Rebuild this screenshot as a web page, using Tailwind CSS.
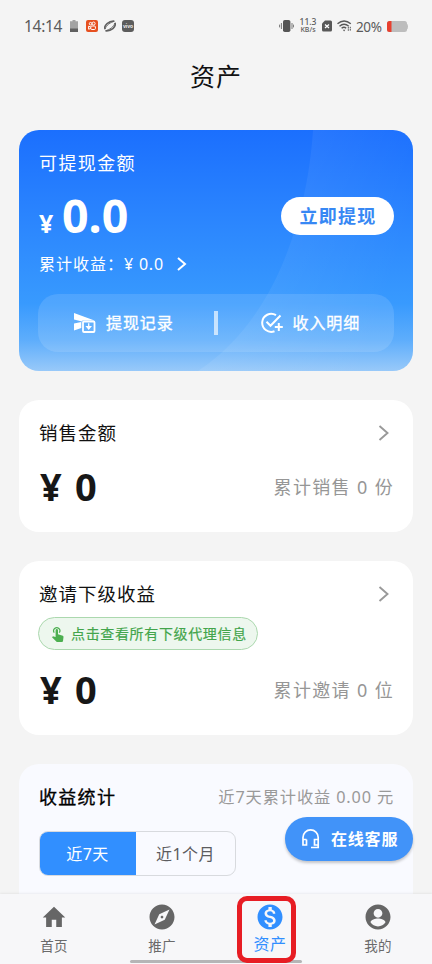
<!DOCTYPE html>
<html lang="zh-CN">
<head>
<meta charset="utf-8">
<meta name="viewport" content="width=device-width, initial-scale=1">
<title>资产</title>
<script src="https://cdn.jsdelivr.net/npm/@tailwindcss/browser@4"></script>
</head>
<body class="bg-[#f4f4f4] font-['Noto_Sans','Noto_Sans_CJK_SC',sans-serif] text-[#111]">
<div class="relative flex h-[964px] w-[432px] flex-col overflow-hidden">

  <!-- Status bar -->
  <header class="flex h-[52px] shrink-0 items-center justify-between pl-6 pr-6 text-[#5a5a5a]">
    <div class="flex items-center">
      <span class="w-[38px] whitespace-nowrap text-[15.5px] leading-5 tracking-[-0.3px]">14:14</span>
      <svg class="ml-2 h-3 w-2" viewBox="0 0 8 12"><path d="M2.5 0h3v1.2H8V12H0V1.2h2.5z" fill="#a3a3a3"/><path d="M0 8.5h8V12H0z" fill="#606060"/></svg>
      <svg class="ml-2 h-3 w-3" viewBox="0 0 12 12"><rect width="12" height="12" rx="2" fill="#e65020"/><g fill="none" stroke="#fff" stroke-width="1"><circle cx="4.6" cy="3.7" r="1.3"/><circle cx="7.6" cy="3.5" r="1.5"/><rect x="4.8" y="6" width="4.6" height="3.5" rx="1"/><path d="M4.8 7 2.6 6.2v3l2.2-.7"/></g></svg>
      <svg class="ml-1.5 h-3 w-3" viewBox="0 0 12 12" fill="none" stroke="#606060"><path d="M1.1 9.2C-.6 5.2 5 .8 10.3 1.2M1.5 10.8C7 11.5 12.5 7 11 2.8" stroke-width="1.6"/><path d="M1.2 8.8C2 5.8 6.5 2 10.4 1.3M1.6 10.7C5.4 10 10 6.5 10.9 3" stroke-width=".9"/></svg>
      <span class="ml-1.5 flex h-3 w-3 items-center justify-center rounded-[3px] bg-[#5c5c5c] font-['Inter',sans-serif] text-[5px] font-semibold leading-none text-white">vivo</span>
    </div>
    <div class="flex items-center">
      <svg class="h-3 w-[15px]" viewBox="0 0 15 12"><rect x="4" width="7.4" height="12" rx="1.8" fill="#555"/><path d="M2.4 3v6M.6 4.6v2.8M13 3v6M14.6 4.6v2.8" stroke="#777" stroke-width="1"/></svg>
      <span class="-mt-0.5 ml-[5px] flex w-[18px] flex-col items-center whitespace-nowrap font-medium"><span class="text-[8.5px] leading-[9px]">11.3</span><span class="text-[7px] leading-[7px]">KB/s</span></span>
      <svg class="ml-[5px] h-[12px] w-[10px]" viewBox="0 0 10 11"><path d="M3 0h5.5Q10 0 10 1.5v8Q10 11 8.500 11h-7Q0 11 0 9.500V3z" fill="#585858"/><path d="m3 4 4 3.500M7 4 3 7.500" stroke="#fff" stroke-width="1.300"/></svg>
      <svg class="ml-[5px] h-3 w-[15px]" viewBox="0 0 15 12" fill="none" stroke="#585858" stroke-width="1.400"><path d="M.5 3.800Q7 -1.800 13.800 3.800M2.500 6.200Q7 2.300 11.800 6.200M4.600 8.300Q7 6.300 9.200 8.300"/><path d="m5.800 9.800 1.300 1.600 1.300-1.600z" fill="#585858" stroke="none"/><path d="M11.300 7v3.800M13.300 6.800v3.800" stroke-width="1" stroke-dasharray="1.600 .6"/></svg>
      <span class="ml-1 w-[28px] whitespace-nowrap pt-px text-[13.5px] leading-5 tracking-[-0.4px]">20%</span>
      <svg class="ml-[3px] h-[11px] w-[21px]" viewBox="0 0 21 11"><rect width="20" height="11" rx="2.500" fill="#bdbdbd"/><path d="M19.500 2.500q1.500.5 1.500 3t-1.500 3z" fill="#bdbdbd"/><path d="M4.500 0H2.500Q0 0 0 2.500v6Q0 11 2.500 11h2z" fill="#e8402f"/></svg>
    </div>
  </header>

  <h1 class="flex h-[78px] shrink-0 justify-center pt-[6px] text-[25px] leading-9 tracking-[1px]">资产</h1>

  <main class="flex flex-col px-[19px]">

    <!-- Balance card -->
    <section class="relative h-[241px] overflow-hidden rounded-[20px] px-5 text-white">
      <svg class="absolute inset-0 h-full w-full" viewBox="0 0 394 241"><defs><linearGradient id="base" x1="0" y1="0" x2="0" y2="1"><stop offset="0" stop-color="#1b6ffe"/><stop offset=".35" stop-color="#2a84fe"/><stop offset=".72" stop-color="#389afe"/><stop offset=".87" stop-color="#5dadfc"/><stop offset="1" stop-color="#98c9f9"/></linearGradient><linearGradient id="sheen" x1="0" y1="0" x2="1" y2=".35"><stop offset="0" stop-color="#fff" stop-opacity=".11"/><stop offset="1" stop-color="#fff" stop-opacity="0"/></linearGradient></defs><path fill="url(#base)" d="M0 0h394v241H0z"/><path d="M294 0C290 66 266 184 179 241h215V0z" fill="url(#sheen)"/></svg>
      <div class="relative">
        <p class="pt-5 text-[18px] leading-[26px] tracking-[1.4px]">可提现金额</p>
        <div class="flex h-[74px] items-center justify-between">
          <div class="mt-[3px] flex items-baseline font-bold"><span class="w-[23px] text-[25px]">¥</span><span class="text-[46.5px] leading-[62px]">0.0</span></div>
          <button class="-mr-px mt-1.5 h-[38px] w-[113px] rounded-full bg-white pl-px text-[18px] font-bold tracking-[1.2px] text-[#3788f4]">立即提现</button>
        </div>
        <p class="flex h-7 items-center text-[16px] leading-6 tracking-[1px]"><span class="w-[85px] whitespace-nowrap">累计收益：</span><span class="whitespace-nowrap tracking-[0.8px]">¥ 0.0</span>
          <svg class="ml-[13px] h-[14px] w-[10px]" viewBox="0 0 10 14" fill="none" stroke="#fff" stroke-width="2"><path d="m1 1 7 6-7 6"/></svg></p>
        <div class="-mx-px mt-4 flex h-[58px] items-center rounded-[20px] bg-white/12 text-[16px] tracking-[0.9px]">
          <div class="flex w-[176px] items-center pl-[35px]">
            <svg class="h-[22px] w-[23px]" viewBox="0 0 23 22"><path d="M1 1 21.500 8.500H9.500L9 9.500 1 7.500zM1 11.500 8.300 10v6L1 18.500z" fill="#fff"/><rect x="10" y="9.500" width="11.500" height="10.500" rx="1" fill="none" stroke="#fff" stroke-width="1.800"/><path d="M15.700 11.200V15M13.800 14.600l1.900 2.300 1.900-2.300z" stroke="#fff" stroke-width="1.300" fill="#fff"/></svg>
            <span class="ml-[10px] whitespace-nowrap leading-6 [-webkit-text-stroke:0.35px_currentColor]">提现记录</span>
          </div>
          <span class="h-6 w-[3.500px] bg-white/65"></span>
          <div class="flex items-center pl-[42px]">
            <svg class="h-[22px] w-[24px]" viewBox="0 0 24 22" fill="none" stroke="#fff" stroke-width="2"><path d="M16 3.200A9 9 0 1 0 14.500 19.200"/><path d="m6.500 9.800 4 4L20.500 3.500M18.800 11v8M14.800 15h8"/></svg>
            <span class="ml-[9px] whitespace-nowrap leading-6 [-webkit-text-stroke:0.35px_currentColor]">收入明细</span>
          </div>
        </div>
      </div>
    </section>

    <!-- Sales card -->
    <section class="mt-[29px] h-[132px] rounded-[20px] bg-white px-5 pt-5">
      <div class="flex h-[26px] items-center justify-between"><h2 class="text-[18.5px] tracking-[1px]">销售金额</h2>
        <svg class="mr-1 h-4 w-[11px]" viewBox="0 0 11 16" fill="none" stroke="#999" stroke-width="1.900"><path d="m1.500 1 8 7-8 7"/></svg></div>
      <div class="mt-[13px] flex h-[56px] items-center justify-between"><div class="-mt-0.5 flex pl-px text-[38px] font-bold leading-[52px] text-[#171717]"><span class="w-[35px]">¥</span><span>0</span></div><p class="-mr-px mt-px text-[18px] tracking-[1.35px] text-[#969696]">累计销售 0 份</p></div>
    </section>

    <!-- Invitation card -->
    <section class="mt-[29px] h-[174px] rounded-[20px] bg-white px-5 pt-5">
      <div class="flex h-[26px] items-center justify-between"><h2 class="text-[18.5px] tracking-[1px]">邀请下级收益</h2>
        <svg class="mr-1 h-4 w-[11px]" viewBox="0 0 11 16" fill="none" stroke="#999" stroke-width="1.900"><path d="m1.500 1 8 7-8 7"/></svg></div>
      <div class="-ml-px mt-[10px] flex h-[33px] w-[220px] items-center rounded-full border border-[#abd8ae] bg-[#edf7ee] pl-[13px] text-[#43a54b]">
        <svg class="h-4 w-[12px]" viewBox="0 0 12 16"><path d="M2.300 6.700A3.100 3.100 0 1 1 7.200 6.700" fill="none" stroke="#4caf50" stroke-width="1.200"/><path d="M3.600 4.200q0-1.200 1.200-1.200T6 4.200v4l4.800 1.600q.8.400.7 1.300L11 15q-.1 1-1 1H5.300q-.6 0-1-.5L0 11.200l.7-.7q.3-.3 1 0l1.900.5z" fill="#4caf50"/></svg>
        <span class="ml-[7px] whitespace-nowrap text-[14px] leading-5 tracking-[0.65px] [-webkit-text-stroke:0.2px_currentColor]">点击查看所有下级代理信息</span>
      </div>
      <div class="mt-[12px] flex h-[56px] items-center justify-between"><div class="-mt-0.5 flex pl-px text-[38px] font-bold leading-[52px] text-[#171717]"><span class="w-[35px]">¥</span><span>0</span></div><p class="-mr-px mt-px text-[18px] tracking-[1.35px] text-[#969696]">累计邀请 0 位</p></div>
    </section>

    <!-- Statistics card -->
    <section class="mt-[29px] h-[180px] rounded-t-[20px] bg-[#f9faff] px-5 pt-5">
      <div class="flex h-[26px] items-center justify-between"><h2 class="text-[18px] tracking-[1.3px] text-black [-webkit-text-stroke:0.3px_currentColor]">收益统计</h2><p class="-mr-px mt-px whitespace-nowrap text-[16.25px] tracking-[0.85px] text-[#999]">近7天累计收益 0.00 元</p></div>
      <div class="mt-[21px] flex h-[45px] w-[197px] overflow-hidden rounded-[9px] border border-[#d8dade] text-[16px] tracking-[0.5px]">
        <button class="w-[96px] bg-[#318fff] pt-px pr-px text-white">近7天</button><button class="flex-1 pt-px text-[#5c5c60]">近1个月</button>
      </div>
    </section>
  </main>

  <!-- Floating customer service button -->
  <button class="absolute left-[285px] top-[817px] flex h-[44px] w-[128px] items-center rounded-full bg-[#4193f9] pl-4 text-white shadow-[0_2px_3px_rgba(0,0,0,0.22)]">
    <svg class="h-[22px] w-[19px]" viewBox="0 0 19 22" fill="none" stroke="#fff" stroke-width="1.700"><path d="M5.500 11.500H2V9.500a7.600 7.600 0 0 1 15.200 0v10H10M2 11v6h3.500v-5.500M17.200 11.500h-3.700V17h3.700"/></svg>
    <span class="ml-[11px] whitespace-nowrap text-[16px] font-bold leading-6 tracking-[0.8px]">在线客服</span>
  </button>

  <!-- Bottom navigation -->
  <nav class="absolute inset-x-0 bottom-0 grid h-[70px] grid-cols-4 bg-[#f7f7f9] text-[13.5px] text-[#6a6a6a] shadow-[0_-1px_2px_rgba(0,0,0,0.06)]">
    <a class="flex flex-col items-center pt-2"><svg class="h-[30px] w-[30px]" viewBox="0 0 24 24" fill="#666"><path d="M10 20v-6h4v6h5v-8h3L12 3 2 12h3v8z" transform="translate(1.2 .9) scale(.9 .95)"/></svg><span class="mt-1 leading-5 tracking-[0.3px]">首页</span></a>
    <a class="flex flex-col items-center pt-2"><svg class="h-[30px] w-[30px]" viewBox="0 0 24 24" fill="#666"><path d="M12 10.900c-.61 0-1.100.49-1.100 1.100s.49 1.100 1.100 1.100 1.100-.49 1.100-1.100-.49-1.100-1.100-1.100zM12 2C6.480 2 2 6.480 2 12s4.480 10 10 10 10-4.480 10-10S17.520 2 12 2zm2.190 12.190L6 18l3.810-8.190L18 6l-3.810 8.190z"/></svg><span class="mt-1 leading-5 tracking-[0.3px]">推广</span></a>
    <a class="flex flex-col items-center pt-2 text-[#318fff]"><svg class="h-[30px] w-[30px]" viewBox="0 0 24 24" fill="#318fff"><path d="M12 2C6.480 2 2 6.480 2 12s4.480 10 10 10 10-4.480 10-10S17.520 2 12 2zm1.410 16.090V20h-2.670v-1.930c-1.710-.36-3.160-1.460-3.270-3.400h1.960c.1 1.050.82 1.870 2.650 1.870 1.960 0 2.400-.98 2.400-1.590 0-.83-.44-1.610-2.670-2.140-2.480-.6-4.180-1.620-4.180-3.670 0-1.720 1.390-2.840 3.110-3.210V4h2.670v1.950c1.860.45 2.790 1.860 2.850 3.390H14.300c-.05-1.110-.64-1.870-2.220-1.870-1.500 0-2.400.68-2.400 1.640 0 .84.65 1.390 2.670 1.910s4.180 1.390 4.180 3.910c-.01 1.830-1.380 2.830-3.120 3.160z"/></svg><span class="mt-0.5 text-[16px] leading-5 tracking-[0.5px]">资产</span></a>
    <a class="flex flex-col items-center pt-2"><svg class="h-[30px] w-[30px]" viewBox="0 0 24 24" fill="#666"><path d="M12 2C6.480 2 2 6.480 2 12s4.480 10 10 10 10-4.480 10-10S17.520 2 12 2zm0 3.500c1.930 0 3.500 1.570 3.500 3.500s-1.570 3.500-3.500 3.500S8.500 10.930 8.500 9 10.070 5.500 12 5.500zm0 14c-2.500 0-4.710-1.280-6-3.220.03-1.990 4-3.080 6-3.080 1.990 0 5.970 1.090 6 3.080-1.290 1.940-3.500 3.220-6 3.220z"/></svg><span class="mt-1 leading-5 tracking-[0.3px]">我的</span></a>
  </nav>
  <div class="absolute bottom-px left-[130px] h-[3px] w-[172px] rounded-full bg-[#b5b5b6]"></div>
  <div class="absolute left-[237px] top-[896px] h-[67px] w-[59px] rounded-[10px] border-[5px] border-[#e71d24]"></div>
</div>
</body>
</html>
